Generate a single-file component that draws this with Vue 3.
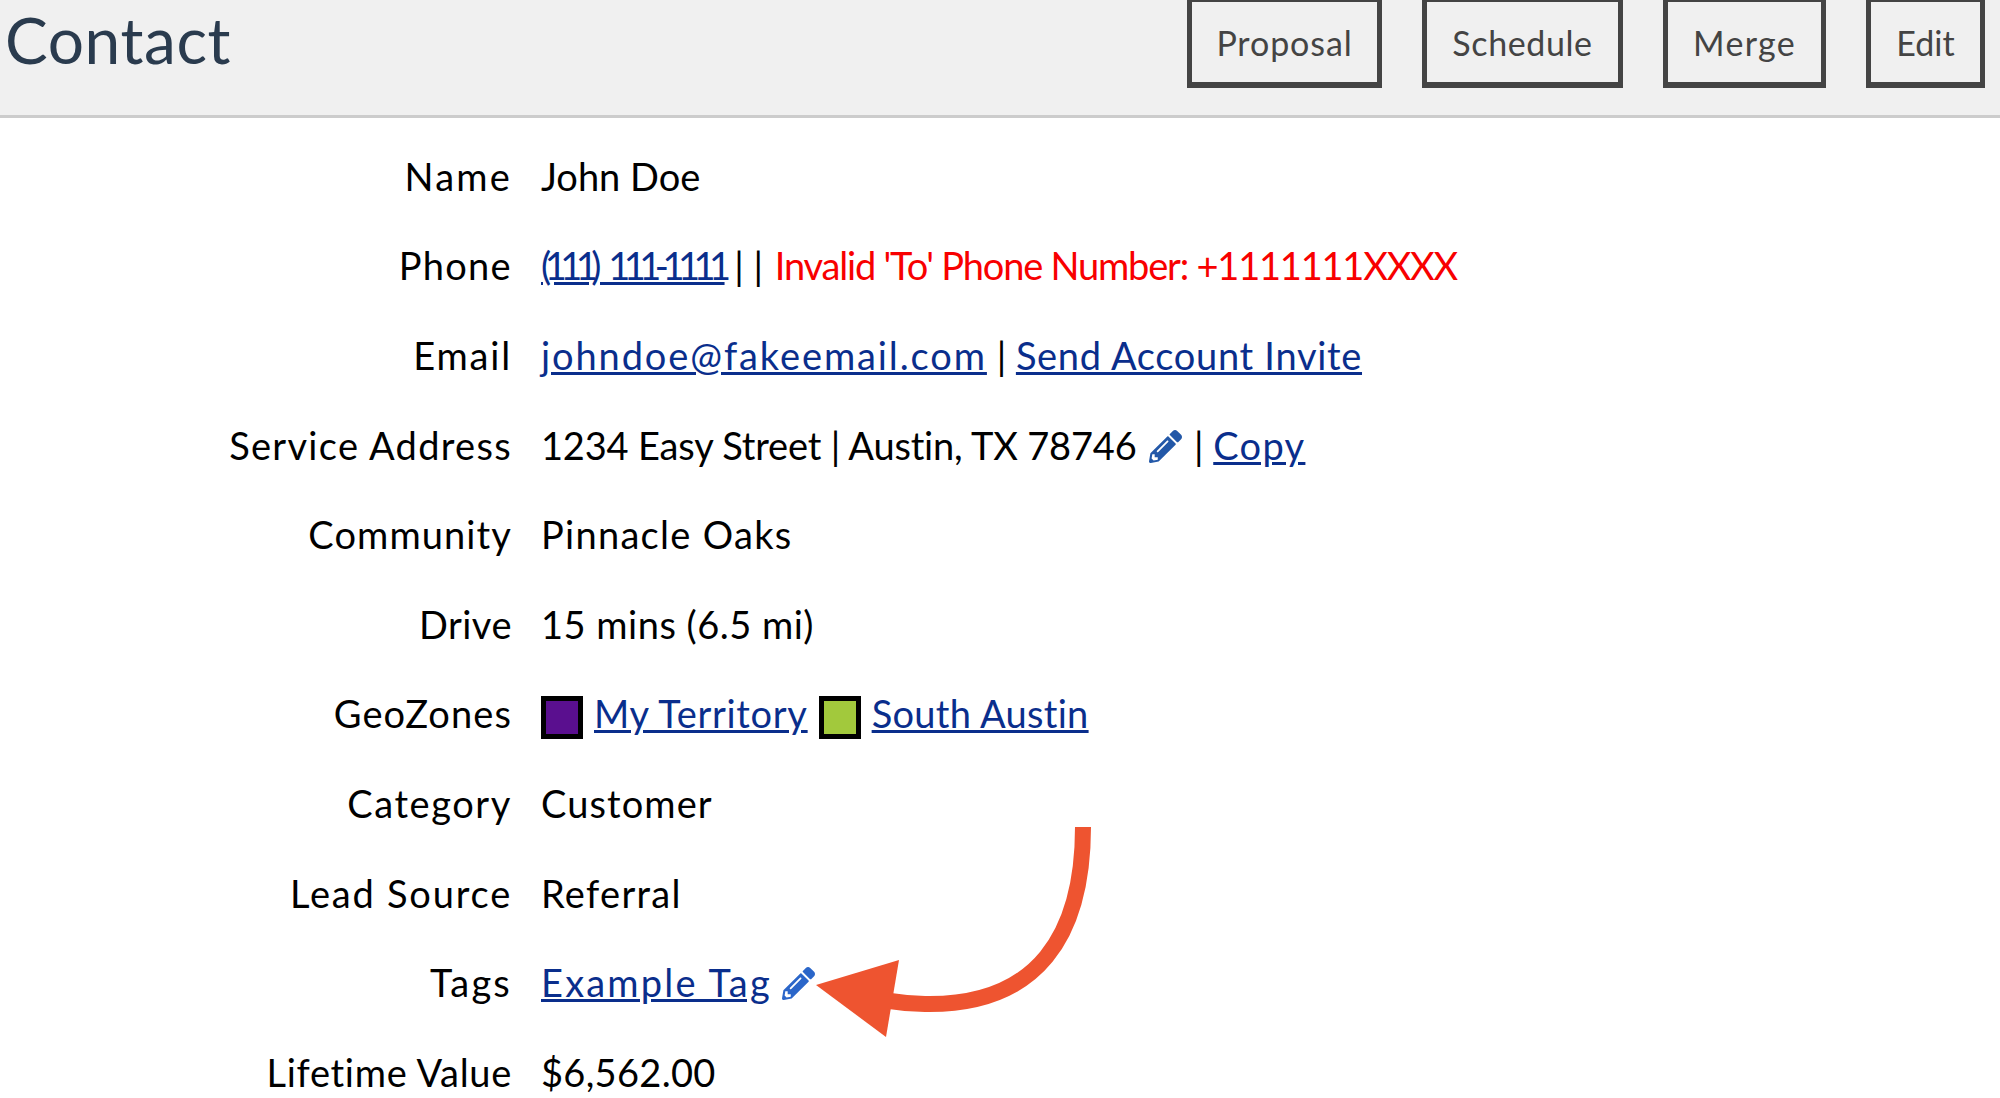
<script setup>
const pencil = "M497.9 142.1l-46.1 46.1c-4.7 4.7-12.3 4.7-17 0l-111-111c-4.7-4.7-4.7-12.3 0-17l46.1-46.1c18.7-18.7 49.1-18.7 67.9 0l60.1 60.1c18.8 18.7 18.8 49.1 0 67.9zM284.2 99.8L21.6 362.4.4 483.9c-2.9 16.4 11.4 30.6 27.8 27.8l121.5-21.3 262.6-262.6c4.7-4.7 4.7-12.3 0-17l-111-111c-4.8-4.7-12.4-4.7-17.1 0zM124.1 339.9c-5.5-5.5-5.5-14.3 0-19.8l154-154c5.5-5.5 14.3-5.5 19.8 0s5.5 14.3 0 19.8l-154 154c-5.5 5.5-14.3 5.5-19.8 0zM88 424h48v36.3l-64.5 11.3-31.1-31.1L51.7 376H88v48z"
</script>

<template>
  <div class="page">
    <header class="head">
      <h1 class="title">Contact</h1>
      <div class="actions">
        <button class="btn proposal">Proposal</button>
        <button class="btn schedule">Schedule</button>
        <button class="btn merge">Merge</button>
        <button class="btn edit">Edit</button>
      </div>
    </header>
    <div class="rows">
      <div class="row"><div class="lab w22">Name</div><div class="val">John Doe</div></div>
      <div class="row"><div class="lab w13">Phone</div><div class="val"><a class="phone">(111) 111-1111</a> | | <span class="err">Invalid 'To' Phone Number: +1111111XXXX</span></div></div>
      <div class="row"><div class="lab w18">Email</div><div class="val"><a class="w19">johndoe@fakeemail.com</a> | <a class="w07">Send Account Invite</a></div></div>
      <div class="row"><div class="lab w13">Service Address</div><div class="val addr"><span class="street">1234 Easy Street | Austin, TX 78746</span> <svg class="pen addr-pen" viewBox="0 0 512 512"><path :d="pencil" fill="#2358a8"/></svg> | <a class="w13">Copy</a></div></div>
      <div class="row"><div class="lab w11">Community</div><div class="val w13">Pinnacle Oaks</div></div>
      <div class="row"><div class="lab w05">Drive</div><div class="val w05">15 mins (6.5 mi)</div></div>
      <div class="row"><div class="lab w11">GeoZones</div><div class="val zones"><span class="sw purple"></span><a class="w07">My Territory</a><span class="sw green"></span><a class="w03">South Austin</a></div></div>
      <div class="row"><div class="lab w16">Category</div><div class="val w11">Customer</div></div>
      <div class="row"><div class="lab w18">Lead Source</div><div class="val w13">Referral</div></div>
      <div class="row"><div class="lab w22">Tags</div><div class="val"><a class="w22">Example Tag</a> <svg class="pen" viewBox="0 0 512 512"><path :d="pencil" fill="#2b66c9"/></svg></div></div>
      <div class="row"><div class="lab w07">Lifetime Value</div><div class="val w03">$6,562.00</div></div>
    </div>
    <svg class="arrow" width="2000" height="1098" viewBox="0 0 2000 1098">
      <path d="M1083 827C1083 935 1038 1006 925 1004C912 1004 902 1003 890 1001" fill="none" stroke="#ee5430" stroke-width="16"/>
      <path d="M816 985L899 960L886 1037Z" fill="#ee5430"/>
    </svg>
  </div>
</template>

<style>
html, body { margin: 0; background: #fff; }
</style>

<style scoped>
.page {
  position: relative;
  width: 2000px;
  height: 1098px;
  overflow: hidden;
  background: #fff;
  font-family: Lato, "Noto Sans", sans-serif;
  color: #000;
}
.head {
  height: 115px;
  box-sizing: content-box;
  background: #f0f0f0;
  border-bottom: 3px solid #cccccc;
  display: flex;
  justify-content: space-between;
  align-items: flex-start;
  padding: 0 15px 0 5px;
}
.title {
  margin: 0;
  font-size: 64px;
  line-height: 80px;
  font-weight: 400;
  letter-spacing: 0.6px;
  color: #2a3b4e;
}
.actions {
  display: flex;
  gap: 40px;
  margin-top: -3px;
}
.btn {
  box-sizing: border-box;
  height: 91px;
  padding: 0;
  border: 5px solid #444;
  border-bottom-width: 6px;
  background: #f0f0f0;
  color: #444;
  font: inherit;
  font-size: 34px;
}
.proposal { width: 195px; letter-spacing: 0.9px; }
.schedule { width: 201px; letter-spacing: 0.6px; }
.merge { width: 163px; letter-spacing: 1.3px; }
.edit { width: 119px; }
.rows {
  padding-top: 13px;
}
.row {
  height: 89.6px;
  display: grid;
  grid-template-columns: 510px 1fr;
  column-gap: 31px;
  align-items: center;
  font-size: 38px;
}
.lab {
  text-align: right;
  margin-right: -2px;
}
.val {
  white-space: nowrap;
}
.w03 { letter-spacing: 0.3px; }
.w05 { letter-spacing: 0.5px; }
.w07 { letter-spacing: 0.7px; }
.w11 { letter-spacing: 1.1px; }
.w13 { letter-spacing: 1.3px; }
.w16 { letter-spacing: 1.6px; }
.w18 { letter-spacing: 1.8px; }
.w19 { letter-spacing: 1.9px; }
.w22 { letter-spacing: 2.2px; }
a {
  color: #0a2e8c;
  text-decoration: underline;
}
.phone {
  letter-spacing: -6.5px;
  word-spacing: 10px;
}
.street {
  letter-spacing: -0.18px;
}
.err {
  color: #f80000;
  letter-spacing: -1.2px;
  margin-left: 2px;
}
.pen {
  width: 33px;
  height: 33px;
  vertical-align: -3px;
}
.addr-pen {
  margin: 0 2px 0 3px;
}
.zones {
  display: flex;
  align-items: center;
  gap: 11px;
}
.sw {
  box-sizing: border-box;
  width: 42px;
  height: 43px;
  border: 5px solid #000;
  margin-top: 8px;
}
.purple { background: #5a0f8f; }
.green { background: #a2c93c; }
.arrow {
  position: absolute;
  left: 0;
  top: 0;
  pointer-events: none;
}
</style>
